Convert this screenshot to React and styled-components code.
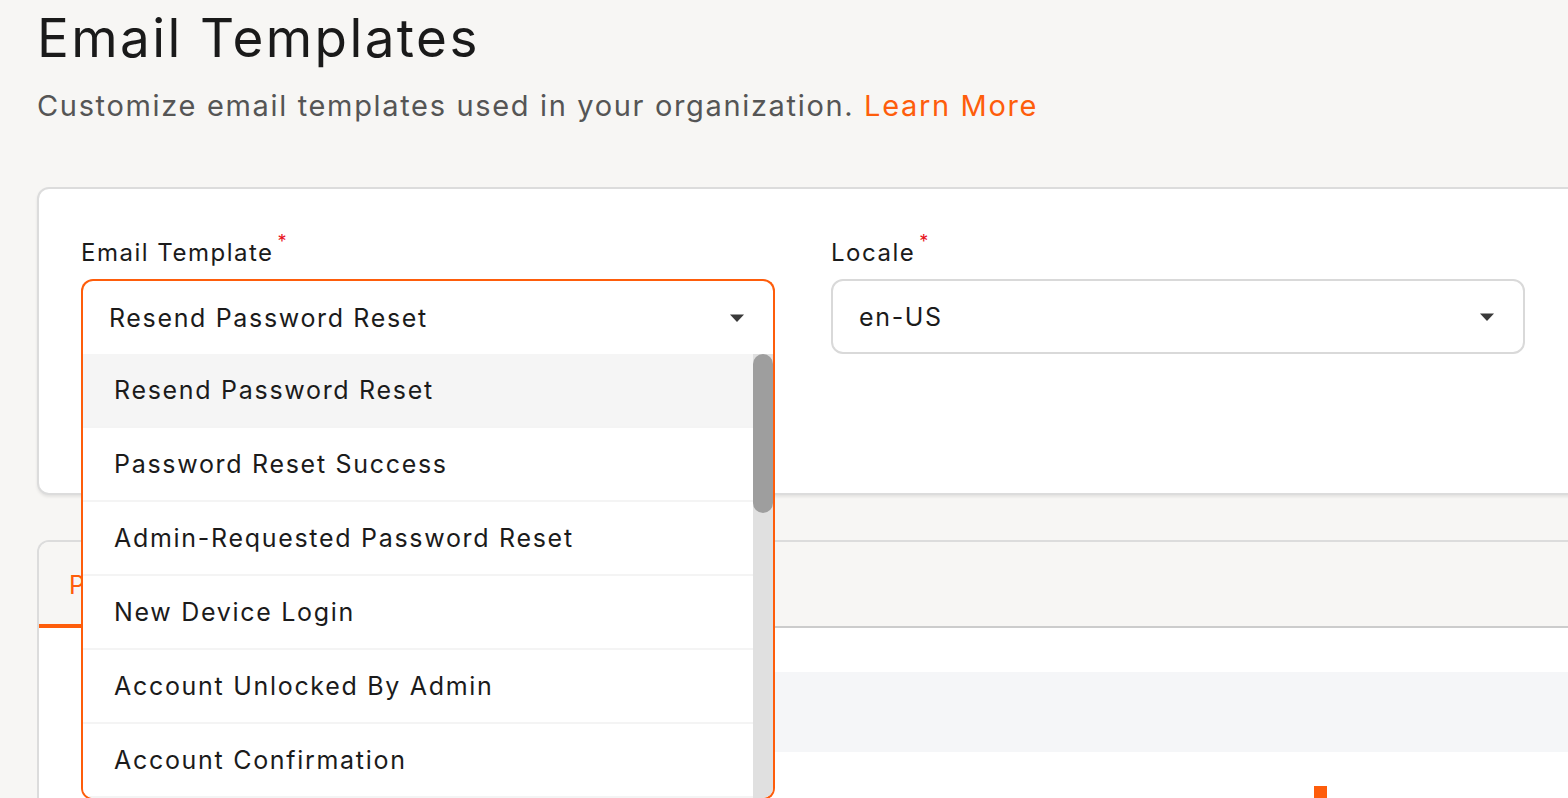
import React from "react";
import styled, { createGlobalStyle } from "styled-components";

const Global = createGlobalStyle`
  html, body { margin: 0; padding: 0; }
  body {
    background: #f7f6f4;
    font-family: "Inter", "Liberation Sans", sans-serif;
    color: #1b1b1b;
    overflow: hidden;
  }
  * { box-sizing: border-box; }
`;

const Page = styled.div`
  width: 1620px;
  height: 798px;
  padding: 6px 0 0 37px;
  overflow: hidden;
`;

const Title = styled.h1`
  margin: 0;
  font-size: 53px;
  font-weight: 400;
  line-height: 64px;
  letter-spacing: 2.4px;
  color: #1a1a1a;
`;

const Subtitle = styled.p`
  margin: 18px 0 0;
  font-size: 29px;
  line-height: 36px;
  letter-spacing: 1.66px;
  color: #555555;
`;

const Link = styled.a`
  color: #fe5d0b;
  text-decoration: none;
`;

const Card = styled.section`
  background: #ffffff;
  border: 2px solid #dcdcdc;
  border-radius: 12px;
  box-shadow: 0 2px 3px rgba(0, 0, 0, 0.08);
`;

const FormCard = styled(Card)`
  margin-top: 63px;
  height: 308px;
  padding: 49px 42px 0;
  display: grid;
  grid-template-columns: 694px 694px;
  column-gap: 56px;
  align-items: start;
`;

const Field = styled.div`
  display: flex;
  flex-direction: column;
  gap: 11px;
  position: relative;
  z-index: ${(p) => (p.$open ? 10 : 1)};
`;

const Label = styled.label`
  font-size: 24px;
  line-height: 30px;
  letter-spacing: 1.5px;
  color: #1b1b1b;
  display: flex;
  align-items: flex-start;
  gap: 4px;
`;

const Req = styled.span`
  color: #e8111a;
  font-size: 18px;
  line-height: 16px;
  margin-top: -4px;
  letter-spacing: 0;
`;

const Control = styled.div`
  position: relative;
`;

const Select = styled.div`
  height: 75px;
  border: 2px solid ${(p) => (p.$open ? "#fe5d0b" : "#d9d9d9")};
  border-bottom: ${(p) => (p.$open ? "none" : "2px solid #d9d9d9")};
  border-radius: ${(p) => (p.$open ? "12px 12px 0 0" : "12px")};
  background: #ffffff;
  display: flex;
  align-items: center;
  justify-content: space-between;
  padding: 0 28px 0 26px;
  font-size: 25px;
  letter-spacing: 1.65px;
  color: #1b1b1b;
`;

const Caret = styled.svg`
  width: 16px;
  height: 10px;
  flex: none;
`;

const Menu = styled.div`
  position: absolute;
  top: 100%;
  left: 0;
  right: 0;
  height: 446px;
  background: #ffffff;
  border: 2px solid #fe5d0b;
  border-top: none;
  border-radius: 0 0 12px 12px;
  display: flex;
  overflow: hidden;
`;

const List = styled.ul`
  list-style: none;
  margin: 0;
  padding: 0;
  flex: 1;
  box-shadow: inset 0 3px 3px -2px rgba(0, 0, 0, 0.05);
`;

const Item = styled.li`
  height: 74px;
  display: flex;
  align-items: center;
  padding-left: 31px;
  font-size: 25px;
  letter-spacing: 1.7px;
  color: #1b1b1b;
  background: ${(p) => (p.$active ? "#f5f5f5" : "#ffffff")};
  border-bottom: 2px solid #f4f4f4;
`;

const Track = styled.div`
  width: 20px;
  flex: none;
  background: #e0e0e0;
`;

const Thumb = styled.div`
  height: 159px;
  border-radius: 10px;
  background: #9e9e9e;
`;

const ContentCard = styled(Card)`
  margin-top: 45px;
  height: 320px;
  overflow: hidden;
  border-bottom: none;
  border-radius: 12px 12px 0 0;
  box-shadow: none;
`;

const Tabs = styled.div`
  height: 86px;
  background: #f7f6f4;
  border-bottom: 2px solid #cccccc;
  display: flex;
  align-items: stretch;
`;

const Tab = styled.div`
  padding: 4px 30px 0;
  display: flex;
  align-items: center;
  font-size: 25px;
  letter-spacing: 1.5px;
  color: ${(p) => (p.$active ? "#fe5d0b" : "#555")};
  border-bottom: 4px solid ${(p) => (p.$active ? "#fe5d0b" : "transparent")};
  margin-bottom: -2px;
`;

const Body = styled.div`
  padding: 44px 0 0 44px;
`;

const CodeBlock = styled.div`
  height: 80px;
  background: #f5f6f8;
`;

const Toolbar = styled.div`
  display: flex;
  justify-content: flex-start;
  padding: 34px 0 0 1231px;
`;

const Marker = styled.div`
  width: 13px;
  height: 14px;
  background: #fe5d0b;
`;

const CaretIcon = () => (
  <Caret viewBox="0 0 16 10">
    <path d="M1 1.5 L15 1.5 L8 9 Z" fill="#3a3a3a" />
  </Caret>
);

const templates = [
  "Resend Password Reset",
  "Password Reset Success",
  "Admin-Requested Password Reset",
  "New Device Login",
  "Account Unlocked By Admin",
  "Account Confirmation",
];

export default function App() {
  return (
    <>
      <Global />
      <Page>
        <Title>Email Templates</Title>
        <Subtitle>
          Customize email templates used in your organization.{" "}
          <Link href="#">Learn More</Link>
        </Subtitle>

        <FormCard>
          <Field $open>
            <Label>
              Email Template<Req>*</Req>
            </Label>
            <Control>
              <Select $open>
                <span>Resend Password Reset</span>
                <CaretIcon />
              </Select>
              <Menu>
                <List>
                  {templates.map((t, i) => (
                    <Item key={t} $active={i === 0}>
                      {t}
                    </Item>
                  ))}
                </List>
                <Track>
                  <Thumb />
                </Track>
              </Menu>
            </Control>
          </Field>
          <Field>
            <Label>
              Locale<Req>*</Req>
            </Label>
            <Control>
              <Select>
                <span>en-US</span>
                <CaretIcon />
              </Select>
            </Control>
          </Field>
        </FormCard>

        <ContentCard>
          <Tabs>
            <Tab $active>Preview</Tab>
          </Tabs>
          <Body>
            <CodeBlock />
            <Toolbar>
              <Marker />
            </Toolbar>
          </Body>
        </ContentCard>
      </Page>
    </>
  );
}
